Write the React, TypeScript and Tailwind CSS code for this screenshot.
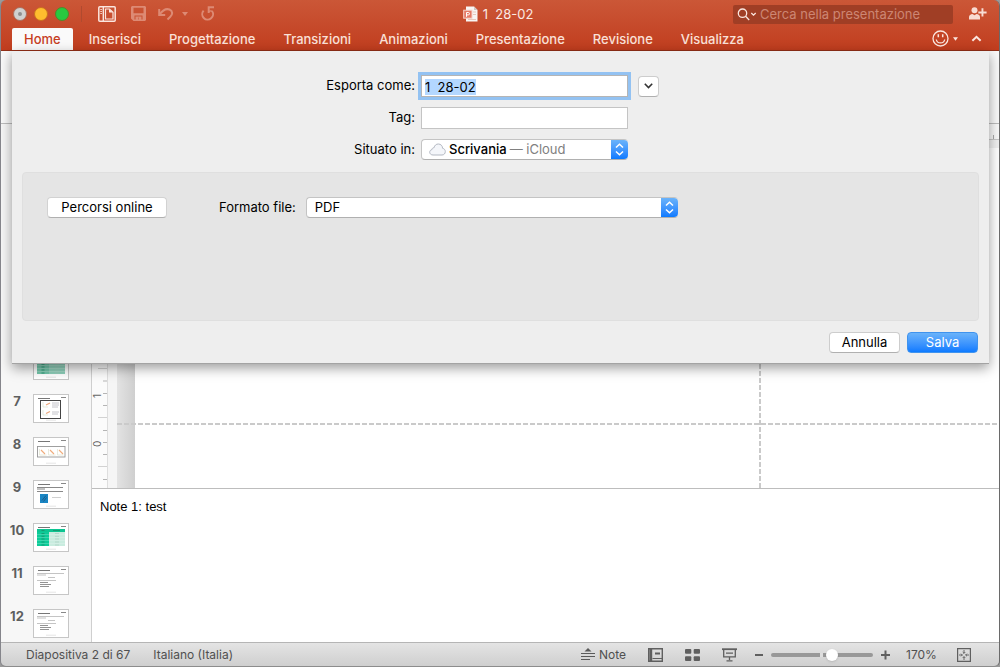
import { useEffect, useRef, useState } from "react";

const tabs = [
  "Home",
  "Inserisci",
  "Progettazione",
  "Transizioni",
  "Animazioni",
  "Presentazione",
  "Revisione",
  "Visualizza",
];

const slides = [1, 2, 3, 4, 5, 6, 7, 8, 9, 10, 11, 12];

const TitleBar = () => (
  <div className="grid h-7 grid-cols-[1fr_auto_1fr] items-center px-3">
    <div className="flex items-center pb-px">
      <div className="flex gap-[7px]">
        <button aria-label="Chiudi" className="flex size-[14px] items-center justify-center rounded-full border border-[#a9705f] bg-[#d0d0d0]">
          <span className="size-1 rounded-full bg-[#8f8f8f]" />
        </button>
        <button aria-label="Riduci" className="size-[14px] rounded-full border border-[#c9701f] bg-[#ffbd2e]" />
        <button aria-label="Ingrandisci" className="size-[14px] rounded-full border border-[#4f8a2a] bg-[#28c940]" />
      </div>
      <span className="ml-3 h-4 w-px bg-[#b04a2f]" />
      <button aria-label="Riquadro" className="ml-4">
        <svg width="18" height="16" viewBox="0 0 18 16" fill="none">
          <rect x="0.8" y="0.8" width="16.4" height="14.4" rx="1" stroke="#fbe6df" strokeWidth="1.5" />
          <path d="M5.3 1v14" stroke="#fbe6df" strokeWidth="1.4" />
          <path d="M2.4 3.5h1.4M2.4 5.5h1.4M2.4 7.5h1.4" stroke="#fbe6df" />
          <path d="M7.5 3h4L15 6.300V13H7.500z" stroke="#fbe6df" strokeWidth="1.200" />
          <path d="M11 3v3.600h4z" fill="#fbe6df" />
        </svg>
      </button>
      <button aria-label="Salva" className="ml-[15px]">
        <svg width="15" height="15" viewBox="0 0 15 15">
          <path
            d="M1 0h13l1 1v13l-1 1H2.500L0 12.500V1zM2.500 1.800v5.400h10V1.800zM3.500 9.500v4h2v-2.500h1.500v2.500h4.500v-4z"
            fill="#dd8a74"
            fillRule="evenodd"
          />
          <path d="M4.500 10.500h6v3.500h-3v-2.500H6v2.500H4.500z" fill="#dd8a74" />
        </svg>
      </button>
      <button aria-label="Annulla operazione" className="ml-3 flex items-center gap-2">
        <svg width="16" height="14" viewBox="0 0 16 14" fill="none" stroke="#dd8a74" strokeWidth="2">
          <path d="M1.200 2v6h6" />
          <path d="M1.500 7.500C4.500 3.500 8 1.200 11.500 2.500c3.500 1.500 3.300 5 .8 7.300L9.500 12.500" />
        </svg>
        <svg width="6" height="4" viewBox="0 0 6 4" fill="#dd8a74">
          <path d="M0 0h6L3 4z" />
        </svg>
      </button>
      <button aria-label="Ripeti" className="ml-[13px]">
        <svg width="14" height="15" viewBox="0 0 14 15" fill="none" stroke="#dd8a74" strokeWidth="2">
          <path d="M2.600 4.600A5.400 5.400 0 1 0 11 5" />
          <path d="M13 1.300H7.700V7" />
          <path d="M8 5.500c1.200-.9 2.400-.9 3.500 0" strokeWidth="1.200" />
        </svg>
      </button>
    </div>
    <div className="flex items-center gap-[5px] pr-1 text-[13px] text-[#fbe9e3]">
      <svg width="15" height="16" viewBox="0 0 15 16">
        <path d="M3 0.500h8l3.500 3.500v11.500H3z" fill="#f8f6f4" />
        <path d="M11 0.500v3.500h3.500z" fill="#cfc6c1" />
        <path d="M10 6h3M10 8.500h3M5 13.500h8" stroke="#e8c9bd" />
        <rect x="0.700" y="4.200" width="8.300" height="8" fill="#e57a66" stroke="#f6d3ca" />
        <path d="M3.500 10.800V6.500h1.800a1.200 1.200 0 0 1 0 2.400H3.500" fill="none" stroke="#fff" />
      </svg>
      <span className="pt-px whitespace-pre">1  28-02</span>
    </div>
    <div className="flex items-center justify-end">
      <label className="flex h-[19px] w-[220px] items-center rounded-xs bg-[#a03e25] pl-1">
        <svg width="20" height="13" viewBox="0 0 20 13" fill="none" stroke="#fbe6df" strokeWidth="1.300">
          <circle cx="5.500" cy="5.200" r="4.200" />
          <path d="M8.600 8.300l3.600 3.700" />
          <path d="M14.300 5l2.200 2.200L18.700 5" />
        </svg>
        <input
          aria-label="Cerca"
          placeholder="Cerca nella presentazione"
          className="ml-[3px] min-w-0 flex-1 bg-transparent pt-px text-[13px] outline-none placeholder:text-[#cd8673]"
        />
      </label>
      <button aria-label="Condividi" className="ml-4">
        <svg width="18" height="14" viewBox="0 0 18 14" fill="#f8dcd3">
          <circle cx="5.500" cy="3.200" r="3" />
          <path d="M0 12.500V10c0-1.800 1.700-2.800 3.500-3l2 1.300 2-1.300c2 .2 3.500 1.200 3.500 3v2.500z" />
          <path d="M12.500 1.300h1.900v3.200h3.200v1.900h-3.200v3.200h-1.900V6.400H9.300V4.500h3.200z" />
        </svg>
      </button>
    </div>
  </div>
);

const Tabs = () => (
  <div className="flex h-[22px] items-stretch pl-[11px] pr-[17px]">
    <nav className="flex flex-1 gap-1 text-[13px] font-medium">
      {tabs.map((tab, i) => (
        <button
          key={tab}
          className={i === 0 ? "rounded-t-xs bg-[#fafafa] px-3 pt-px text-[#c63d1e]" : "px-3 pt-px text-[#fae0d8]"}
        >
          {tab}
        </button>
      ))}
    </nav>
    <button aria-label="Commenti" className="flex items-center gap-1 pb-px">
      <svg width="17" height="17" viewBox="0 0 17 17" fill="none" stroke="#fbe6df" strokeWidth="1.300">
        <circle cx="8.500" cy="8.500" r="7.500" />
        <path d="M4.300 9.500c.8 4.500 7.600 4.500 8.400 0" />
        <path d="M6.300 4.300v3M10.700 4.300v3" strokeWidth="1.500" />
      </svg>
      <svg width="5" height="4" viewBox="0 0 6 4" fill="#fbe6df">
        <path d="M0 0h6L3 4z" />
      </svg>
    </button>
    <button aria-label="Riduci barra" className="ml-[13px] pb-px">
      <svg width="11" height="7" viewBox="0 0 12 7" fill="none" stroke="#fbe6df" strokeWidth="2.200">
        <path d="M1.500 6L6 1.700 10.500 6" />
      </svg>
    </button>
  </div>
);

const SlideArt = ({ n }: { n: number }) => {
  if (n === 7) {
    return (
      <>
        <rect x="7.500" y="6.500" width="20" height="18" fill="#fff" stroke="#444" />
        <path d="M10 8v5h5M10 16v5h5" stroke="#d8e3cf" strokeWidth="0.700" fill="none" />
        <path d="M13 11l4-2M13 19.500l4-2" stroke="#eca77c" strokeWidth="1.200" />
        <path d="M19 9h7M19 11h7M19 13h6M19 18h7M19 20h6" stroke="#bdbdc4" strokeWidth="0.900" />
      </>
    );
  }
  if (n === 8) {
    return (
      <>
        <rect x="4.500" y="9.500" width="27.500" height="10.500" fill="#fff" stroke="#969696" strokeWidth="0.900" />
        <path d="M6.500 18v-6M15.500 18v-6M24.500 18v-6M6.500 18h7M15.500 18h7M24.500 18h6" stroke="#dfe3cf" strokeWidth="0.700" fill="none" />
        <path d="M8 13l4 4M17 13l4 4M26 13l4 4" stroke="#f0ac7c" strokeWidth="1.100" />
      </>
    );
  }
  if (n === 9) {
    return (
      <>
        <path d="M4 7.500h26M4 9h8M4 11.500h26" stroke="#7c7c7c" strokeWidth="0.900" />
        <rect x="7" y="14" width="8" height="9" fill="#1a86c4" />
        <path d="M9 20.500l4-5M10.500 21.500l3-4" stroke="#1c4f78" strokeWidth="0.800" />
        <path d="M19 17.500h9" stroke="#c4c4c4" strokeWidth="0.800" />
      </>
    );
  }
  if (n === 10 || n === 6) {
    return (
      <>
        <rect x="4" y="6" width="28" height="17" fill={n === 10 ? "#c9ecdf" : "#8ed0ba"} />
        <rect x="4" y="6" width="12" height="17" fill={n === 10 ? "#0dcb98" : "#72c6aa"} />
        <rect x="4" y="6" width="28" height="3" fill="#0cc591" />
        <path d="M4 11.500h28M4 14.500h28M4 17.500h28M4 20.500h28" stroke="#fff" strokeWidth="0.200" />
        <path d="M8.500 10.500h3M8.500 13.300h3M8.500 16h3M8.500 19h3M8.500 22h3M8.500 7.500h3M20 7.500h7" stroke="#1b8664" strokeWidth="0.700" />
        <path d="M22 10.500h4M22 13.300h4M22 16h4M22 19h4M22 22h4" stroke="#a5c9bd" strokeWidth="0.600" />
      </>
    );
  }
  return (
    <>
      <path d="M4 7.500h27M4 9h9M15 11.500h7M4 14.500h19" stroke="#ababab" strokeWidth="0.700" />
      <path d="M7 16.500h8M7 18.500h11M7 20.500h9" stroke="#777" strokeWidth="0.800" />
    </>
  );
};

const Sidebar = () => (
  <ol className="w-[91px] shrink-0 overflow-hidden border-r border-[#cfcfcf] bg-[#f7f7f7] pt-3">
    {slides.map((n) => (
      <li key={n} className="flex h-[43px] items-start">
        <span className="w-8 text-center text-[13px] leading-[14px] font-bold text-[#5d5f60]">{n}</span>
        <svg width="36" height="29" viewBox="0 0 36 29">
          <rect x="0.500" y="0.500" width="35" height="28" fill="#fff" stroke="#c6c6c6" />
          <path d="M5 4.500h12" stroke="#777" />
          <path d="M28 3.500h5" stroke="#7a7a7a" strokeWidth="0.900" />
          <SlideArt n={n} />
          <path d="M13 26.200h10" stroke="#d4d4d4" strokeWidth="0.600" />
        </svg>
      </li>
    ))}
  </ol>
);

const Ruler = () => (
  <svg width="15" height="128" viewBox="0 0 15 128" className="mt-auto shrink-0">
    <path d="M6 8.500h9M6 57.500h9M6 106.500h9" stroke="#d2d2d2" />
    <path d="M11 21h4M11 33.500h4M11 45.500h4M11 70.500h4M11 82.500h4M11 94.500h4M11 119.500h4" stroke="#b5b5b5" />
    <text transform="translate(9 38) rotate(-90)" fontSize="10" fill="#666">1</text>
    <text transform="translate(9 87) rotate(-90)" fontSize="10" fill="#666">0</text>
  </svg>
);

const Workspace = () => (
  <div className="flex min-w-0 flex-1 flex-col bg-white">
    <div className="flex h-4 shrink-0 items-end justify-end border-b border-[#c9c9c9] bg-[#fafafa] pr-[5px]">
      <span className="h-1 w-px bg-[#aaa]" />
    </div>
    <div className="flex min-h-0 flex-1">
      <div className="flex w-4 flex-col border-r border-[#dedede] bg-[#fbfbfb]">
        <Ruler />
      </div>
      <div className="w-[9px] bg-[#f5f5f5]" />
      <div className="relative flex flex-1 overflow-hidden">
        <div className="w-[18px] bg-linear-to-r from-[#e3e3e3] to-[#cfcfcf]" />
        <div className="flex-1 border-t-8 border-[#f1f1f1] bg-white" />
        {/* slide guides */}
        <div className="absolute inset-x-0 bottom-[63px] h-[2px] bg-[repeating-linear-gradient(90deg,#cacaca_0_5px,transparent_5px_7px)]" />
        <div className="absolute inset-y-0 right-[238px] w-[2px] bg-[repeating-linear-gradient(0deg,#cacaca_0_5px,transparent_5px_7px)]" />
      </div>
    </div>
    <textarea
      aria-label="Note"
      defaultValue="Note 1: test"
      className="h-[154px] shrink-0 resize-none border-t border-[#bdbdbd] px-2 py-[10px] font-['Liberation_Sans'] text-[13px] leading-4 text-black outline-none"
    />
  </div>
);

const SelectCap = () => (
  <span className="pointer-events-none flex w-[17px] shrink-0 items-center justify-center self-stretch rounded-r bg-linear-to-b from-[#6ab3fa] to-[#0a7aff]">
    <svg width="9" height="13" viewBox="0 0 9 13" fill="none" stroke="#fff" strokeWidth="1.500">
      <path d="M1 4.500L4.500 1.200 8 4.500M1 8.500l3.500 3.300L8 8.500" />
    </svg>
  </span>
);

const ExportSheet = () => {
  const nameRef = useRef<HTMLInputElement>(null);

  useEffect(() => {
    nameRef.current?.focus();
    nameRef.current?.select();
  }, []);

  return (
    <form
      onSubmit={(e) => e.preventDefault()}
      className="absolute top-0 right-[10px] left-[11px] border-b border-[#a3a3a3] bg-[#eeeeee] px-[10px] pb-[10px] text-[13px] text-black shadow-[0_4px_12px_rgba(0,0,0,0.4)]"
    >
      <div className="grid grid-cols-[1fr_207px_1fr] items-center gap-x-[6px] gap-y-[10px] pt-6 pl-12">
        <label htmlFor="name" className="text-right">Esporta come:</label>
        <input
          id="name"
          ref={nameRef}
          defaultValue="1  28-02"
          className="h-[22px] border border-[#b5b5b5] bg-white px-[3px] pt-px ring-3 ring-[#93c2f2] outline-none selection:bg-[#b3d7ff] selection:text-black"
        />
        <button type="button" aria-label="Espandi" className="ml-1 flex size-[21px] items-center justify-center rounded border border-[#cdcdcd] border-b-[#b0b0b0] bg-white">
          <svg width="9" height="6" viewBox="0 0 9 6" fill="none" stroke="#333" strokeWidth="1.600">
            <path d="M0.800 0.800L4.500 4.500 8.200 0.800" />
          </svg>
        </button>
        <label htmlFor="tag" className="text-right">Tag:</label>
        <input id="tag" className="h-[22px] border border-[#c4c4c4] bg-white px-[3px] outline-none" />
        <span />
        <label htmlFor="place" className="text-right">Situato in:</label>
        <div className="flex h-[21px] items-center rounded border border-r-0 border-[#c4c4c4] border-b-[#b0b0b0] bg-white pl-[7px]">
          <svg width="17" height="13" viewBox="0 0 17 13" fill="#f4f6fa" stroke="#b3b8c2">
            <path d="M4 12C2 12 .7 10.700.7 9.200c0-1.400 1-2.400 2.300-2.600C3 5.300 4 4.600 5 4.800 5.500 2.300 7.300 1 9.300 1c2.500 0 4.200 1.800 4.300 4.300 1.700.3 2.700 1.600 2.700 3.300 0 2-1.400 3.400-3.300 3.400z" />
          </svg>
          <select id="place" className="ml-[3px] field-sizing-content appearance-none font-medium outline-none">
            <option>Scrivania</option>
          </select>
          <span className="ml-[3px] flex-1 text-[#808080]">— iCloud</span>
          <SelectCap />
        </div>
      </div>

      <div className="mt-3 flex min-h-[149px] items-start rounded border border-[#dfdfdf] bg-[#e5e5e5] px-6 pt-6">
        <button type="button" className="h-[21px] w-[120px] rounded border border-[#d2d2d2] border-b-[#b0b0b0] bg-white leading-[19px]">
          Percorsi online
        </button>
        <label htmlFor="format" className="ml-[52px] leading-[21px]">Formato file:</label>
        <div className="ml-[10px] flex h-[21px] w-[372px] items-center rounded border border-r-0 border-[#c4c4c4] border-b-[#b0b0b0] bg-white">
          <select id="format" className="flex-1 appearance-none pl-2 outline-none">
            <option>PDF</option>
          </select>
          <SelectCap />
        </div>
      </div>

      <div className="mt-[11px] flex justify-end gap-[7px] pr-px">
        <button type="button" className="h-[21px] w-[71px] rounded border border-[#cdcdcd] border-b-[#b0b0b0] bg-white leading-[19px]">
          Annulla
        </button>
        <button type="submit" className="h-[21px] w-[71px] rounded border border-[#3f93ee] bg-linear-to-b from-[#6ab3fa] to-[#0a7aff] leading-[19px] text-white">
          Salva
        </button>
      </div>
    </form>
  );
};

const StatusBar = () => {
  const [zoom, setZoom] = useState(61);

  return (
    <footer className="flex h-6 shrink-0 items-center border-t border-[#b5b5b5] bg-linear-to-b from-[#e4e4e4] to-[#cfcfcf] pr-7 pl-[25px] text-xs text-[#505050]">
      <span>Diapositiva 2 di 67</span>
      <span className="ml-[23px] flex-1">Italiano (Italia)</span>
      <button className="flex items-center gap-1">
        <svg width="14" height="13" viewBox="0 0 14 13" fill="none" stroke="#5a5a5a">
          <path d="M7 0l3.500 3.500h-7z" fill="#5a5a5a" stroke="none" />
          <path d="M0 5.500h14M0 8.500h14M0 11.500h9" />
        </svg>
        Note
      </button>
      <button aria-label="Normale" className="ml-[22px]">
        <svg width="15" height="14" viewBox="0 0 15 14" fill="none" stroke="#5f5f5f" strokeWidth="1.400">
          <path d="M.7.700h13.600v12.600H.7z" />
          <path d="M2.800 1v12" strokeWidth="2.800" />
          <path d="M4.500 10.500h10" strokeWidth="1" />
          <path d="M7 5.500h5" strokeWidth="2" />
        </svg>
      </button>
      <button aria-label="Sequenza diapositive" className="ml-[22px]">
        <svg width="15" height="12" viewBox="0 0 15 12" fill="#5f5f5f">
          <rect width="6.300" height="4.800" rx="1" />
          <rect x="8.700" width="6.300" height="4.800" rx="1" />
          <rect y="7.200" width="6.300" height="4.800" rx="1" />
          <rect x="8.700" y="7.200" width="6.300" height="4.800" rx="1" />
        </svg>
      </button>
      <button aria-label="Presentazione" className="ml-[22px]">
        <svg width="15" height="14" viewBox="0 0 15 14" fill="none" stroke="#5f5f5f" strokeWidth="1.300">
          <path d="M0 1.200h15" strokeWidth="1.800" />
          <path d="M1.700 2v6.800h11.600V2M4 5.200h7M7.500 9v3M4.500 12.800h6" />
        </svg>
      </button>
      <button aria-label="Riduci zoom" className="ml-[18px]">
        <svg width="8" height="10" viewBox="0 0 8 10" stroke="#5f5f5f" strokeWidth="2">
          <path d="M0 5h8" />
        </svg>
      </button>
      <input
        type="range"
        aria-label="Zoom"
        value={zoom}
        onChange={(e) => setZoom(Number(e.target.value))}
        className="mx-2 h-1 w-[102px] appearance-none rounded-full bg-[linear-gradient(90deg,#989898_49px,#dedede_49px_52px,#989898_52px)] [&::-webkit-slider-thumb]:size-3 [&::-webkit-slider-thumb]:appearance-none [&::-webkit-slider-thumb]:rounded-full [&::-webkit-slider-thumb]:bg-white [&::-webkit-slider-thumb]:shadow-sm"
      />
      <button aria-label="Aumenta zoom">
        <svg width="9" height="10" viewBox="0 0 9 10" stroke="#5f5f5f" strokeWidth="2">
          <path d="M0 5h9M4.500.5v9" />
        </svg>
      </button>
      <span className="ml-4 w-[51px]">170%</span>
      <button aria-label="Adatta alla finestra">
        <svg width="14" height="14" viewBox="0 0 14 14" fill="none" stroke="#5f5f5f">
          <path d="M.6.600h12.800v12.800H.6z" strokeWidth="1.200" />
          <path d="M7 2v3.500M7 8.500V12M2 7h3.500M8.500 7H12M5.700 4L7 5.300 8.300 4M5.700 10L7 8.700 8.300 10M4 5.700L5.300 7 4 8.300M10 5.700L8.700 7 10 8.300" strokeWidth="0.900" />
        </svg>
      </button>
    </footer>
  );
};

export default function App() {
  return (
    <div className="h-screen bg-[#9a9a9a] font-['Inter',sans-serif]">
      <div className="flex h-full flex-col overflow-hidden rounded-md border-x border-b border-l-[#85858b] border-r-[#6a6a6a] border-b-[#8c8c8c]">
        <header className="shrink-0 border-b border-[#932f17] bg-linear-to-b from-[#cb5737] to-[#c13d1e]">
          <TitleBar />
          <Tabs />
        </header>
        <main className="relative flex min-h-0 flex-1 flex-col">
          <div className="h-[73px] shrink-0 border-b border-[#bdbdbd] bg-[#fafafa]" />
          <div className="flex min-h-0 flex-1">
            <Sidebar />
            <Workspace />
          </div>
          <ExportSheet />
        </main>
        <StatusBar />
      </div>
    </div>
  );
}
